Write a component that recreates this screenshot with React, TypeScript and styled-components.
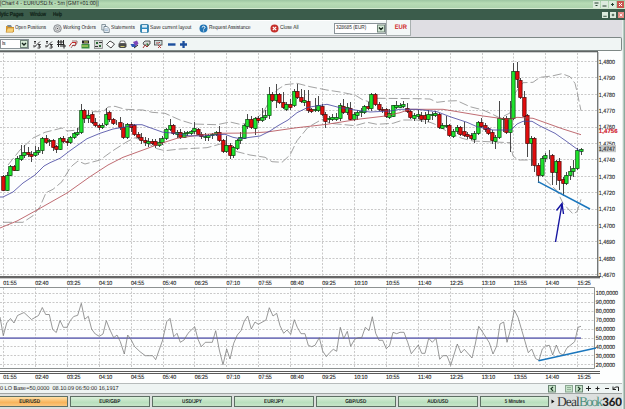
import React from "react";
import styled, { createGlobalStyle } from "styled-components";

const GlobalCss = createGlobalStyle`
  html, body {
    margin: 0;
    padding: 0;
    overflow: hidden;
  }
  body, svg text {
    font-family: "Liberation Sans", sans-serif;
    text-rendering: geometricPrecision;
  }
`;

const WindowCss = styled.div`
  width: 625px;
  height: 409px;
  display: flex;
  flex-direction: column;
  background: #dfe0e2;
  color: #222;
  font-size: 6px;
  white-space: nowrap;
  overflow: hidden;
  svg {
    display: block;
    flex: none;
  }
`;

const TitleBar = styled.div`
  height: 8px;
  display: flex;
  align-items: center;
  justify-content: space-between;
  background: linear-gradient(#9dc6a2, #b7dcb5 40%, #add3ad);
  border-bottom: 1px solid #d3ead0;
  padding-right: 1px;
`;

const Label = styled.span<{ $squeeze?: number; $size?: number; $bold?: boolean; $center?: boolean }>`
  display: inline-block;
  font-size: ${(p) => p.$size || 5.8}px;
  font-weight: ${(p) => (p.$bold ? 700 : 400)};
  line-height: 8px;
  transform: scaleX(${(p) => p.$squeeze || 1});
  transform-origin: ${(p) => (p.$center ? "center" : "left")};
`;

const MenuBar = styled.div`
  height: 11px;
  display: flex;
  align-items: center;
  background: #3b5c4b;
  color: #0b1a12;
  padding-right: 1px;
`;

const MenuItem = styled(Label)<{ $w: number }>`
  width: ${(p) => p.$w}px;
  -webkit-text-stroke: 0.2px #0b1a12;
`;

const WindowButtons = styled.div`
  display: flex;
  gap: 1px;
  margin-left: auto;
`;

const WindowButton = styled.div<{ $close?: boolean; $small?: boolean }>`
  width: ${(p) => (p.$small ? 6 : 7)}px;
  height: ${(p) => (p.$small ? 6 : 7)}px;
  margin-left: ${(p) => (p.$small ? 1 : 0)}px;
  background: ${(p) => (p.$close ? (p.$small ? "#e58b84" : "#c9544e") : "#dcebdd")};
  color: ${(p) => (p.$close ? "#fff" : "#24402f")};
`;

const BodyRow = styled.div`
  display: flex;
  flex: 1;
  min-height: 0;
`;

const Content = styled.div`
  width: 622px;
  display: flex;
  flex-direction: column;
`;

const WindowEdge = styled.div`
  width: 1px;
  background: #b9cbc3;
  border-left: 1px solid #e6efec;
  border-right: 1px solid #8fa89d;
`;

const TopTools = styled.div`
  height: 17px;
  display: flex;
  background: #dfdee3;
`;

const ToolGrid = styled.div`
  width: 381px;
  padding-left: 5px;
  display: grid;
  grid-template-columns: 48px 48px 39px 59px 71px 64px 52px;
  align-items: center;
  background: #f3f7f7;
  border-top: 1px solid #fff;
  box-sizing: content-box;
  height: 14px;
  border-bottom: 1px solid #b5baba;
`;

const ToolItem = styled.div`
  display: flex;
  align-items: center;
  gap: 1px;
`;

const Currency = styled.div`
  width: 19px;
  height: 15px;
  border: 1px solid #a9b0b0;
  border-top: 0;
  background: #f3f7f7;
  color: #cf1f28;
  display: flex;
  align-items: center;
  justify-content: center;
  padding-left: 4px;
`;

const SelectBox = styled.div<{ $w: number; $h: number }>`
  width: ${(p) => p.$w}px;
  height: ${(p) => p.$h}px;
  box-sizing: border-box;
  border: 1px solid #8b9499;
  background: #fff;
  display: flex;
  align-items: center;
  justify-content: space-between;
  padding-left: 1px;
`;

const ChartTools = styled.div`
  height: 12px;
  display: flex;
  align-items: center;
  background: #f0f5f4;
  border: 1px solid #7e8886;
  border-left: 0;
  border-radius: 0 2px 2px 0;
`;

const IconStrip = styled.div`
  display: grid;
  grid-template-columns: repeat(13, 12.2px);
  justify-items: center;
  margin-left: 2px;
`;

const StatusBar = styled.div`
  height: 9px;
  display: flex;
  align-items: center;
  background: #eef4f3;
  border-top: 1px solid #b7bcbc;
`;

const StatusTools = styled.div`
  margin-left: auto;
`;

const TabRow = styled.div`
  flex: 1;
  display: flex;
  align-items: center;
  gap: 2px;
  background: #dcdfde;
  border-top: 1px solid #a0a5a4;
`;

const Tab = styled.div<{ $active?: boolean; $w: number }>`
  box-sizing: border-box;
  width: ${(p) => p.$w}px;
  height: 11px;
  flex: none;
  display: flex;
  align-items: center;
  justify-content: center;
  border: 1px solid #5d6f64;
  border-left-width: ${(p) => (p.$active ? 0 : 1)}px;
  padding-right: ${(p) => (p.$active ? 8 : 0)}px;
  color: #1c261f;
  background: ${(p) =>
    p.$active
      ? "linear-gradient(#ffe0a6, #f8b45c 60%, #fbc880)"
      : "linear-gradient(#d9efd9, #b9dfbe 60%, #c8e6ca)"};
`;

const TabArrow = styled.div`
  width: 4px;
`;

const Logo = styled.div`
  display: flex;
  align-items: baseline;
  height: 14px;
  line-height: 13px;
  font-family: "Liberation Serif", serif;
  font-size: 13.5px;
  letter-spacing: -0.9px;
  color: #33383a;
  em {
    font-style: normal;
    letter-spacing: -1.7px;
    color: #4f9280;
  }
  b {
    font-family: Lato, sans-serif;
    font-weight: 900;
    font-size: 11.5px;
    letter-spacing: -0.2px;
    margin-left: 1px;
    color: #222;
  }
`;

const GridLine = styled.path`
  stroke: #c9c9c9;
  stroke-width: 1;
  stroke-dasharray: 2 1.5;
  fill: none;
`;

const Curve = styled.polyline<{ $color: string; $dash?: string; $width?: number }>`
  fill: none;
  stroke: ${(p) => p.$color};
  stroke-width: ${(p) => p.$width || 0.8};
  stroke-dasharray: ${(p) => p.$dash || "none"};
`;

const AxisText = styled.text<{ $color?: string }>`
  font-size: 6px;
  fill: ${(p) => p.$color || "#222"};
  stroke: ${(p) => p.$color || "#222"};
  stroke-width: 0.12;
`;

const TIMES = [
  "01:55", "02:40", "03:25", "04:10", "04:55", "05:40", "06:25", "07:10", "07:55", "08:40",
  "09:25", "10:10", "10:55", "11:40", "12:25", "13:10", "13:55", "14:40", "15:25",
];
const STEP = 31.9;
const gridX = (i: number) => Math.round(3 + i * STEP) + 0.5;

// one row per 5 minute bar: [high, body top, body bottom, low, up]
const BARS: number[][] = [
  [175, 176, 190, 190, 0], [172, 175, 190, 190, 1], [165, 166, 175, 175, 1], [165, 166, 170, 170, 0],
  [156, 158, 170, 170, 1], [145, 155, 159, 160, 1], [145, 152, 155, 157, 1], [147, 152, 154, 156, 0],
  [151, 154, 156, 161, 0], [146, 152, 155, 156, 1], [147, 150, 152, 154, 1], [137, 138, 150, 153, 1],
  [135, 138, 142, 143, 0], [139, 140, 141, 145, 1], [139, 140, 147, 150, 0], [145, 146, 149, 152, 0],
  [137, 138, 149, 149, 1], [136, 138, 141, 142, 0], [139, 141, 142, 145, 0], [136, 137, 142, 143, 1],
  [132, 133, 137, 138, 1], [128, 132, 134, 135, 1], [104, 110, 132, 133, 1], [109, 110, 118, 122, 0],
  [110, 115, 118, 122, 1], [112, 114, 122, 123, 0], [118, 122, 125, 126, 0], [124, 125, 127, 129, 0],
  [123, 125, 127, 128, 1], [108, 114, 124, 125, 1], [111, 112, 119, 121, 0], [118, 119, 123, 124, 0],
  [120, 122, 122, 124, 1], [117, 122, 127, 129, 0], [123, 127, 137, 138, 0], [123, 124, 137, 138, 1],
  [122, 124, 127, 131, 0], [124, 125, 134, 135, 0], [132, 134, 137, 138, 0], [133, 137, 140, 143, 0],
  [137, 140, 142, 145, 0], [138, 141, 143, 146, 1], [139, 141, 143, 144, 0], [139, 141, 145, 147, 0],
  [138, 142, 145, 146, 1], [136, 138, 142, 144, 1], [128, 129, 138, 139, 1], [119, 125, 129, 130, 1],
  [124, 125, 133, 134, 0], [130, 132, 134, 137, 1], [129, 132, 137, 138, 0], [131, 133, 137, 137, 1],
  [131, 132, 133, 135, 1], [130, 131, 133, 134, 1], [122, 128, 131, 133, 1], [128, 129, 134, 134, 0],
  [132, 134, 136, 138, 0], [133, 136, 137, 140, 1], [134, 135, 137, 140, 1], [133, 134, 135, 138, 1],
  [131, 132, 134, 135, 1], [126, 132, 140, 141, 0], [139, 140, 151, 152, 0], [136, 145, 151, 152, 1],
  [143, 145, 155, 158, 0], [146, 147, 155, 157, 1], [139, 140, 148, 149, 1], [132, 137, 140, 143, 1],
  [124, 125, 138, 138, 1], [114, 119, 126, 128, 1], [116, 119, 127, 128, 0], [117, 118, 128, 134, 1],
  [116, 118, 120, 122, 0], [108, 117, 120, 121, 1], [110, 115, 117, 119, 1], [87, 94, 115, 118, 1],
  [92, 94, 100, 101, 0], [84, 94, 100, 107, 1], [93, 94, 102, 103, 0], [92, 102, 107, 108, 0],
  [102, 104, 109, 110, 1], [99, 104, 107, 109, 0], [89, 91, 105, 106, 1], [84, 91, 97, 98, 0],
  [89, 97, 101, 102, 0], [90, 100, 102, 105, 1], [90, 101, 110, 112, 0], [108, 109, 111, 112, 0],
  [98, 109, 110, 111, 1], [96, 105, 110, 111, 1], [104, 106, 114, 115, 0], [112, 114, 121, 127, 0],
  [116, 118, 119, 122, 1], [114, 117, 119, 120, 1], [113, 117, 119, 120, 1], [103, 105, 118, 120, 1],
  [99, 106, 112, 113, 0], [103, 107, 112, 114, 1], [102, 108, 119, 119, 0], [112, 114, 119, 120, 1],
  [110, 112, 115, 119, 1], [108, 111, 112, 116, 1], [105, 106, 112, 113, 1], [102, 106, 108, 109, 0],
  [93, 94, 108, 110, 1], [93, 94, 104, 105, 0], [102, 104, 109, 110, 0], [107, 109, 110, 112, 0],
  [108, 109, 116, 117, 0], [109, 113, 117, 118, 1], [105, 105, 116, 116, 1], [101, 105, 107, 108, 1],
  [103, 105, 107, 107, 1], [101, 104, 106, 107, 1], [103, 108, 111, 112, 0], [110, 111, 117, 118, 0],
  [113, 115, 118, 120, 1], [110, 114, 116, 118, 1], [112, 115, 119, 121, 0], [112, 115, 119, 123, 0],
  [110, 114, 119, 121, 1], [112, 114, 115, 119, 1], [111, 113, 115, 116, 1], [113, 114, 127, 128, 0],
  [123, 125, 128, 128, 1], [116, 125, 126, 127, 1], [124, 125, 135, 136, 0], [129, 131, 136, 137, 1],
  [125, 127, 131, 133, 1], [126, 127, 134, 135, 0], [122, 131, 135, 136, 0], [132, 134, 136, 138, 0],
  [133, 135, 138, 139, 0], [131, 133, 139, 142, 1], [121, 122, 133, 134, 1], [118, 122, 126, 127, 0],
  [123, 125, 129, 131, 0], [127, 128, 133, 134, 0], [130, 132, 140, 143, 0], [135, 137, 141, 148, 1],
  [101, 118, 137, 138, 1], [117, 118, 119, 131, 1], [116, 118, 132, 133, 0], [101, 118, 132, 151, 1],
  [63, 71, 118, 119, 1], [62, 71, 79, 87, 0], [78, 80, 97, 98, 0], [91, 97, 116, 124, 0],
  [114, 115, 143, 156, 0], [136, 138, 143, 165, 1], [137, 138, 165, 171, 0], [163, 165, 175, 182, 0],
  [156, 158, 175, 176, 1], [153, 155, 158, 161, 1], [150, 154, 154, 158, 1], [154, 155, 172, 184, 0],
  [160, 161, 172, 184, 1], [158, 161, 180, 189, 0], [177, 179, 183, 195, 0], [172, 175, 183, 184, 1],
  [166, 171, 175, 179, 1], [160, 168, 171, 176, 1], [148, 150, 168, 169, 1], [148, 149, 151, 154, 1],
];

const FAST_MA =
  "0,197 3,197 13,192 23,183 35,175 44,166 50,162.7 60,158.3 70,150.7 78,145 87,138.7 100,133.3 113,129 127,126.7 135,124.7 142,124.7 150,127.7 163,132.3 177,133.3 187,135.7 203,136 225,134.3 233,137.3 240,138.7 250,137.3 260,136 270,131 278,125.7 288,120 297,112.7 308,107.3 327,104.3 340,107.7 357,110.3 370,112 390,111 400,109.3 417,109.3 437,111.7 450,116.7 467,122.3 477,126.7 493,130 511,130 517,124 523,121.3 532,121.3 540,126 555,133.3 567,141.7 581,152";
const SLOW_MA =
  "0,228 17,221 37,210 67,193 90,176.7 108,165 123,157.3 143,150 160,143.7 177,138.3 200,135 217,133.3 250,133 267,132 283,129.7 297,127.7 327,124.3 360,119 383,116.3 400,112.7 410,109.3 443,109.3 467,113.3 483,116 500,118.3 510,119.3 517,117.3 533,118.3 547,123.3 563,129 581,134.7";
const UPPER_BAND =
  "8,165 20,150 33,138 45,132.3 62,128 67,131 78,130 85,116.7 92,111.7 103,111.7 108,107 115,106.3 125,109.3 143,110 152,112.3 165,113.3 180,120 193,124 217,124.7 230,122 240,124.3 250,122.7 263,113 270,100 277,90 285,84.7 297,83.3 310,86.7 327,90 340,92 355,95 363,100 370,102 377,98.3 420,98.7 430,99 437,102.3 448,101 457,100.7 470,106.7 483,110 492,114 500,118 510,113 515,93 523,82.7 533,82.3 540,77.3 552,76 562,73.7 570,76.7 575,83.3 577,91.7 581,110.7";
const LOWER_BAND =
  "3,222.3 23,222.3 33,215.7 40,206.7 46,192.7 53,189.3 62,181.7 70,168 73,165 78,161 85,164 100,160 110,152.7 115,149.3 127,141.7 135,137.7 147,143 157,148.7 165,150.7 180,149 207,147.7 223,143.3 237,151.7 250,155 265,157.3 272,161.7 282,162.3 290,155 297,140.7 308,127.3 322,119.3 330,123.3 355,125.7 367,122.3 377,124.3 393,123.3 403,120 417,120 430,122.3 437,125 450,133.3 462,138.3 473,141 510,142.7 513,156 518,160 532,160 537,170 547,181.7 557,190.7 563,203.3 573,214 577,211.7 581,199.3";
const OSCILLATOR =
  "0,317 3.3,335.7 6.7,323 10.5,318.5 14,323 17.5,315.5 24,312.5 31.5,319.5 38.5,315.5 42.3,307.5 45.7,314.5 49.3,314.5 52.7,329.5 56.3,332.5 60,320.5 63.3,327.3 67,327.3 70.3,320.5 73.7,316.5 77.7,315.3 81.3,303.3 84.7,319.3 88.3,316.3 91.7,329.3 95.3,334 99.3,336.3 103,334 106.3,320.7 110,330 113.7,337.7 117,335 120.3,341.7 124.3,354 127.7,335 131.3,340 134.7,346.7 140,351.7 145.3,355.7 152.7,355.7 155.7,359.7 162.7,340 166.7,321.7 170,318.3 173.7,336.7 177,333.3 180.3,342.3 184,340 188,333.3 194.7,326.7 198,339.3 201.3,346.7 205.3,342.3 212.3,342.3 215.7,330.7 219.3,350 223,364.7 226.7,349 230,359 233.7,343.3 237.3,335 241,330.7 244.3,321 247.7,316 251.3,329 255,322 258.3,324.3 266,320 269.3,307.7 273,316 276.7,313.3 280,325.7 283.7,333.3 287,330 290.7,334.3 294.3,319.7 297.3,327.3 301,333.7 305,333.7 308.3,345.3 311.7,346.7 315,345.3 319.3,337.7 322.7,351 326.3,356.7 330,352.3 333.3,349.3 336.7,351.3 340.3,327.3 343.7,338.7 347.3,331.3 350.7,346.3 354.7,339.3 358.3,337.7 361.7,337.7 365.3,327.3 369,330.7 372.3,316.7 375.7,333.3 379,340.3 382.7,340.3 386.3,348.7 389.7,345.3 393,332.3 396.7,333.7 400,332.3 404,332.3 407.7,342.3 411.3,353.7 418.3,345 421.7,353.3 425,353.3 428.7,338.3 432.3,342.3 436,338.3 439.7,359.3 443,355.7 447,355.7 450.7,365.3 457.3,344 461,353 464.3,349.3 472,358 475.3,344 478.7,326.3 482.3,331.7 489.3,342.7 493,354 496.7,346 500,324 503.7,322 507,342.3 510.7,329 514.3,310 518,317.3 521.7,330 528.3,352.7 531.7,349 535.7,358.7 539,360.3 542.3,349 545.7,346 549.3,345.3 552.7,355 556.3,345 559.7,353.3 563.3,355 566.7,348.3 574.7,341.7 578,327.3 581,326.3";

const TimeAxis: React.FC<{ y: number }> = ({ y }) => (
  <>
    {TIMES.map((t, i) => (
      <AxisText key={t} x={3.3 + i * STEP} y={y} textLength={13.3} lengthAdjust="spacingAndGlyphs">
        {t}
      </AxisText>
    ))}
  </>
);

const PriceChart: React.FC = () => (
  <svg width="622" height="236" viewBox="0 51 622 236">
    <rect x="0" y="51" width="622" height="236" fill="#fdfefe" />
    {TIMES.map((t, i) => (
      <GridLine key={t} d={`M${gridX(i)} 53V276`} />
    ))}
    {Array.from({ length: 14 }, (_, i) => (
      <GridLine key={i} d={`M0 ${Math.round(61 + i * 16.4) + 0.5}H597`} />
    ))}
    <Curve points={UPPER_BAND} $color="#8c8c8c" $dash="9 3" />
    <Curve points={LOWER_BAND} $color="#8c8c8c" $dash="9 3" />
    {BARS.map(([high, top, bottom, low, up], i) => {
      const x = Math.round(3 + i * 3.543);
      return (
        <g key={i} stroke={up ? "#06400c" : "#4c0606"}>
          <path d={`M${x + 0.5} ${high}V${low + 1}`} stroke="#4a4a4a" />
          <rect
            x={x - 1.3}
            y={top + 0.5}
            width="3.4"
            height={bottom - top}
            fill={up ? "#1fe52c" : "#e30d0d"}
            strokeWidth="0.7"
          />
        </g>
      );
    })}
    <Curve points={SLOW_MA} $color="#b0474f" />
    <Curve points={FAST_MA} $color="#4343a0" />
    <Curve points="538,181.7 590,209" $color="#1a76bd" $width={1.5} />
    <Curve points="555.5,242 562,204" $color="#1414a0" $width={1.4} />
    <Curve points="556.5,210.5 562,203.5 563.5,214" $color="#1414a0" $width={1.4} />
    <rect x="0" y="51" width="598" height="1.3" fill="#5f6363" />
    <rect x="597" y="52" width="1.4" height="226" fill="#737777" />
    <rect x="0" y="276" width="600" height="2" fill="#666" />
    <rect x="0" y="278" width="600" height="1" fill="#c9c9c9" />
    {Array.from({ length: 14 }, (_, i) => (
      <AxisText key={i} x="598.8" y={63.8 + i * 16.4} textLength={16.2} lengthAdjust="spacingAndGlyphs">
        {`1,4${800 - i * 10}`}
      </AxisText>
    ))}
    <AxisText x="598.8" y="133" textLength={18.8} $color="#d0202c" fontWeight="700">
      1,4756
    </AxisText>
    <rect x="598.5" y="145" width="17.5" height="7.2" fill="#c4c6c6" />
    <AxisText x="598.8" y="150.8" textLength={16.2} lengthAdjust="spacingAndGlyphs">
      1,4747
    </AxisText>
    <TimeAxis y={284.6} />
  </svg>
);

const OscillatorChart: React.FC = () => (
  <svg width="622" height="96" viewBox="0 287 622 96">
    <rect x="0" y="287" width="622" height="96" fill="#fdfefe" />
    {TIMES.map((t, i) => (
      <GridLine key={t} d={`M${gridX(i)} 288V368`} />
    ))}
    {Array.from({ length: 9 }, (_, i) => (
      <GridLine key={i} d={`M0 ${Math.round(293 + i * 8.9) + 0.5}H594`} />
    ))}
    <path d="M0 287.5H594.5V368.5H0" fill="none" stroke="#8d9191" />
    <Curve points="0,338.2 581,338.2" $color="#7778bb" $width={1.7} />
    <Curve points={OSCILLATOR} $color="#777" $width={0.75} />
    <Curve points="538.5,360.7 596,348" $color="#1a76bd" $width={1.6} />
    <path d="M0 371.5H600M0 373.5H600" stroke="#5a5a5a" />
    {Array.from({ length: 9 }, (_, i) => (
      <AxisText
        key={i}
        x="595.8"
        y={295.3 + i * 8.9}
        textLength={i ? 19.3 : 22.3}
        lengthAdjust="spacingAndGlyphs"
      >
        {`${100 - i * 10},0000`}
      </AxisText>
    ))}
    <TimeAxis y={379.4} />
  </svg>
);

const Chevron: React.FC<{ h: number }> = ({ h }) => (
  <svg width="8" height={h} viewBox="0 0 8 8">
    <rect x="0.5" y="0.5" width="7" height="7" fill="#d5e9d6" stroke="#71867a" />
    <path d="M2 3l2 2 2-2" fill="none" stroke="#14251b" strokeWidth="1.4" />
  </svg>
);

const TOOLS: { text: string; icon: React.ReactNode; squeeze: number }[] = [
  {
    text: "Open Positions",
    squeeze: 0.79,
    icon: (
      <>
        <path d="M1 2h3l1 1h4v5H1z" fill="#d9992e" />
        <path d="M2 1h4l1 2H3z" fill="#7e8b92" />
        <path d="M2.5 4H9L8 8.3H1z" fill="#f7d279" stroke="#b67b22" strokeWidth="0.5" />
      </>
    ),
  },
  {
    text: "Working Orders",
    squeeze: 0.81,
    icon: (
      <>
        <circle cx="4.5" cy="4.5" r="3.8" fill="#d3d6d7" stroke="#777b80" strokeWidth="0.8" />
        <circle cx="4.5" cy="4.5" r="2" fill="#f4f4f4" stroke="#85898d" strokeWidth="0.7" />
        <circle cx="4.5" cy="4.5" r="0.8" fill="#555" />
      </>
    ),
  },
  {
    text: "Statements",
    squeeze: 0.81,
    icon: (
      <>
        <path d="M.8.5h3.7V6H.8z" fill="#e9f0f5" stroke="#60727e" strokeWidth="0.7" />
        <path d="M3 2.5h3l2.2 2v4H3z" fill="#f7fafc" stroke="#4f6472" strokeWidth="0.7" />
        <path d="M4 5h3M4 6.7h3" stroke="#6994ba" strokeWidth="0.7" />
      </>
    ),
  },
  {
    text: "Save current layout",
    squeeze: 0.83,
    icon: (
      <>
        <rect x="0.5" y="0.5" width="8" height="8" rx="1" fill="#2d8abf" stroke="#1b648f" strokeWidth="0.6" />
        <rect x="2" y="1" width="5" height="2.6" fill="#d9ebf5" />
        <rect x="2" y="5" width="5" height="3.3" fill="#f5f9fb" />
      </>
    ),
  },
  {
    text: "Request Assistance",
    squeeze: 0.82,
    icon: (
      <>
        <circle cx="4.5" cy="4.5" r="4" fill="#2375b4" />
        <path d="M3.2 3.5q.1-1.3 1.4-1.3T6 3.4q0 .7-.9 1.1-.5.3-.5 1M4.6 6.4v1" fill="none" stroke="#fff" />
      </>
    ),
  },
  {
    text: "Close All",
    squeeze: 0.82,
    icon: (
      <>
        <circle cx="4.5" cy="4.5" r="4" fill="#c5302a" />
        <path d="M2.8 2.8l3.4 3.4M6.2 2.8L2.8 6.2" stroke="#fff" strokeWidth="1.2" />
      </>
    ),
  },
];

const LineTool = (
  <path d="M1 1.5h2M2 1v3M1 7.5l6-6M5 4.5h2.5L5.5 6H7v2H4.5M0 6h2.5" fill="none" stroke="#222" strokeWidth="0.9" />
);

const CHART_ICONS: React.ReactNode[] = [
  LineTool,
  LineTool,
  <path d="M0 2h7M0 4.5h7M1.5 0v7M4 0v7M6.5 0v4M5 6h4M7 4v4.5" fill="none" stroke="#222" />,
  <>
    <path d="M0 6.5l3-4h4l-1 3H3" fill="none" stroke="#c42b2b" />
    <path d="M3 1h5v2M2 8l2-3 2 1 2-3" fill="none" stroke="#8a5555" strokeWidth="0.8" />
  </>,
  <>
    <rect x="1" y="0.5" width="7" height="3" fill="#222" />
    <rect x="0.5" y="4" width="8" height="4.5" fill="#3c8f3c" />
    <path d="M1 6h6M3 2h4" stroke="#dfe86d" />
  </>,
  <>
    <rect x="0.5" y="0.5" width="8" height="8" fill="#d5d8d5" stroke="#888" strokeWidth="0.8" />
    <path d="M2 2h2v2H2zM5 5h2v2H5z" fill="#2b6b35" />
    <path d="M5 2.5h3M1 6.5h3" stroke="#333" />
  </>,
  <path d="M.5 4.5L4 1l2 1.2L8.5 4 5 8 3 6.5z" fill="#fff" stroke="#333" strokeWidth="0.9" />,
  <>
    <path d="M2.5 1h4l1 2.5h-6z" fill="#fff" stroke="#333" strokeWidth="0.7" />
    <path d="M.5 3.5h8v3.2L7 8H2L.5 6.7z" fill="#4b4b4b" />
    <path d="M2.5 6.5h4" stroke="#cdc76d" />
  </>,
  <>
    <path d="M3 2l4-1.5 1.5 3-3 3z" fill="#7d48b8" />
    <path d="M.5 4h4L6 7H2z" fill="#3056b5" />
    <path d="M4 8l4-3" stroke="#222" />
  </>,
  <>
    <path d="M1 3l2-2h5v3l-2 1H2z" fill="#d5d9d5" stroke="#333" strokeWidth="0.8" />
    <path d="M1 8l2-3 2 2 2-2" fill="none" stroke="#a03333" />
    <path d="M5 3l1 3" stroke="#2f7a36" />
  </>,
  <>
    <rect x="0.5" y="0.5" width="7.5" height="4.5" fill="#cdd" stroke="#444" strokeWidth="0.8" />
    <path d="M2 3h3l1-1M4 5l3 3M7 5L4 8" fill="none" stroke="#a33" strokeWidth="0.9" />
  </>,
  <rect x="1" y="3.3" width="7.5" height="2.4" fill="#1c4f9d" />,
  <path d="M3.4 1h2.3v2.3H8v2.4H5.7V8H3.4V5.7H1V3.3h2.4z" fill="#1c4f9d" />,
];

const TABS = ["EUR/USD", "EUR/GBP", "USD/JPY", "EUR/JPY", "GBP/USD", "AUD/USD", "5 Minutes"];

const GLYPHS = ["M1.5 2h4M2.5 4.5h2", "M1.5 5h4", "M2 3.5h3M3.5 2v3", "M2 2l3 3M5 2L2 5"];

const App: React.FC = () => {
  return (
    <WindowCss>
      <GlobalCss />
      <TitleBar>
        <Label $size={6} $squeeze={0.88}>[Chart 4 - EUR/USD.fx - 5m [GMT+01:00]]</Label>
        <WindowButtons>
          {GLYPHS.map((d, i) => (
            <WindowButton key={d} $close={i === 3}>
              <svg width="7" height="7" viewBox="0 0 7 7">
                <path d={d} stroke="currentColor" fill="none" />
              </svg>
            </WindowButton>
          ))}
        </WindowButtons>
      </TitleBar>
      <MenuBar>
        <MenuItem $w={30} $squeeze={0.84}>lytic Pages</MenuItem>
        <MenuItem $w={23} $squeeze={0.78}>Window</MenuItem>
        <MenuItem $w={20} $squeeze={0.76}>Help</MenuItem>
        <WindowButtons>
          {GLYPHS.slice(1).map((d, i) => (
            <WindowButton key={d} $small $close={i === 2}>
              <svg width="6" height="6" viewBox="0 0 7 7">
                <path d={d} stroke="currentColor" fill="none" />
              </svg>
            </WindowButton>
          ))}
        </WindowButtons>
      </MenuBar>
      <BodyRow>
        <Content>
          <TopTools>
            <ToolGrid>
              {TOOLS.map((tool) => (
                <ToolItem key={tool.text}>
                  <svg width="9" height="9" viewBox="0 0 9 9">
                    {tool.icon}
                  </svg>
                  <Label $squeeze={tool.squeeze}>{tool.text}</Label>
                </ToolItem>
              ))}
              <SelectBox $w={52} $h={11}>
                <Label $squeeze={0.82}>328685 (EUR)</Label>
                <Chevron h={9} />
              </SelectBox>
            </ToolGrid>
            <Currency>
              <Label $size={6.5} $squeeze={0.9} $bold $center>EUR</Label>
            </Currency>
          </TopTools>
          <ChartTools>
            <SelectBox $w={29} $h={10}>
              <Label $squeeze={0.85}>ls</Label>
              <Chevron h={8} />
            </SelectBox>
            <IconStrip>
              {CHART_ICONS.map((icon, i) => (
                <svg key={i} width="9" height="9" viewBox="0 0 9 9">
                  {icon}
                </svg>
              ))}
            </IconStrip>
          </ChartTools>
          <PriceChart />
          <OscillatorChart />
          <StatusBar>
            <Label $squeeze={0.955}>0 LO Base=50,0000&nbsp; 08.10.09 06:50:00 16,1917</Label>
            <StatusTools>
              <svg width="76" height="9" viewBox="546 383 76 9">
                <rect x="548.5" y="384.5" width="7" height="6.5" fill="#c5e3c8" stroke="#6a8573" />
                <path d="M553 385.8l-2 2 2 2" fill="none" stroke="#173020" strokeWidth="1.2" />
                <rect x="565.5" y="384.5" width="7" height="6.5" fill="#c5e3c8" stroke="#8aa792" />
                <path d="M567 386.5h4M567 388.5h4" stroke="#6f8c78" strokeWidth="0.6" />
                <rect x="575.5" y="384.5" width="7" height="6.5" fill="#c5e3c8" stroke="#6a8573" />
                <path d="M578 385.8l2 2-2 2" fill="none" stroke="#173020" strokeWidth="1.2" />
                <path
                  d="M586 387.5h5M588.5 385v5M595.5 387.5h4M597.5 385.5v4M605 387.5h4M613 385.5v3h3M613 388.5l2.5-2.5h3v4"
                  fill="none"
                  stroke="#222"
                />
              </svg>
            </StatusTools>
          </StatusBar>
          <TabRow>
            {TABS.map((tab, i) => (
              <Tab key={tab} $active={i === 0} $w={i === 0 ? 68 : i === 6 ? 69 : 80}>
                <Label $bold $center $size={5.6} $squeeze={i === 6 ? 0.78 : 0.83}>{tab}</Label>
              </Tab>
            ))}
            <TabArrow>
              <svg width="4" height="5" viewBox="0 0 4 5">
                <path d="M0.5 0.5v4l3-2z" fill="#111" />
              </svg>
            </TabArrow>
            <Logo>
              Deal<em>Book</em>
              <b>360</b>
            </Logo>
          </TabRow>
        </Content>
        <WindowEdge />
      </BodyRow>
    </WindowCss>
  );
};

export default App;
